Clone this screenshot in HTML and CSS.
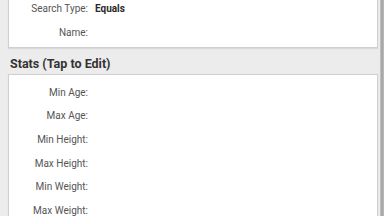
FILE: index.html
```html
<!DOCTYPE html>
<html lang="en">
<head>
    <meta charset="UTF-8">
    <meta name="viewport" content="width=device-width, initial-scale=1.0">
    <title>Search</title>
    <link rel="stylesheet" href="styles.css">
</head>
<body>
    <div class="screen">
        <div class="content">
            <div class="card card-top">
                <div class="row"><span class="label">Search Type:</span><span class="value">Equals</span></div>
                <div class="row"><span class="label">Name:</span><span class="value"></span></div>
            </div>
            <h2 class="section-title">Stats (Tap to Edit)</h2>
            <div class="card card-stats">
                <div class="row"><span class="label">Min Age:</span><span class="value"></span></div>
                <div class="row"><span class="label">Max Age:</span><span class="value"></span></div>
                <div class="row"><span class="label">Min Height:</span><span class="value"></span></div>
                <div class="row"><span class="label">Max Height:</span><span class="value"></span></div>
                <div class="row"><span class="label">Min Weight:</span><span class="value"></span></div>
                <div class="row"><span class="label">Max Weight:</span><span class="value"></span></div>
            </div>
        </div>
        <div class="scrollbar"></div>
    </div>
</body>
</html>
```

FILE: styles.css
```css
* { box-sizing: border-box; }
html, body {
    margin: 0;
    padding: 0;
    height: 100%;
    overflow: hidden;
}
body {
    font-family: Roboto, 'Liberation Sans', sans-serif;
    background: #ececec;
    color: #333;
}
.screen {
    display: flex;
    height: 216px;
    overflow: hidden;
}
.content {
    flex: 1;
    padding-left: 8px;
}
.card {
    background: #fff;
    border: 1px solid #cfcfcf;
    box-shadow: 0 1px 1px rgba(0, 0, 0, 0.08);
}
.card-top {
    margin-top: -3px;
    border-top: none;
    padding-bottom: 3px;
}
.card-stats {
    padding-top: 5px;
    padding-bottom: 10px;
}
.row {
    display: flex;
    align-items: center;
    height: 23.7px;
    font-size: 10px;
}
.label {
    width: 79px;
    text-align: right;
    color: #555;
}
.value {
    margin-left: 7px;
    font-weight: bold;
    color: #2a2a2a;
}
.section-title {
    margin: 0;
    height: 26px;
    line-height: 32px;
    padding-left: 2px;
    font-size: 12.5px;
    font-weight: bold;
    color: #333;
}
.scrollbar {
    width: 4px;
    margin-left: 2px;
    background: linear-gradient(to right, #c8c8c8, #a0a0a0 50%, #c0c0c0);
}
```
